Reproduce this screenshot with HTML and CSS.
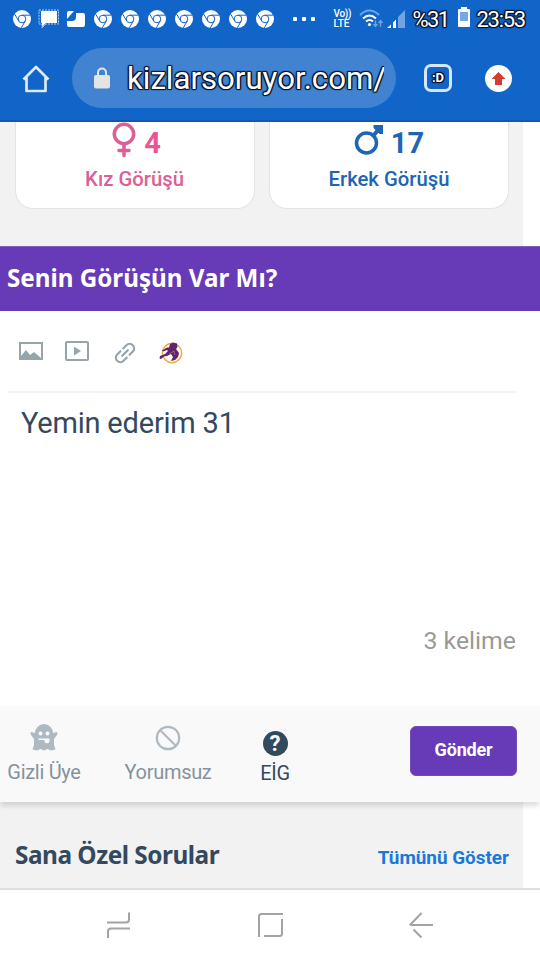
FILE: index.html
```html
<!DOCTYPE html>
<html lang="tr">
<head>
<meta charset="utf-8">
<title>kizlarsoruyor.com</title>
<link rel="stylesheet" href="styles.css">
</head>
<body>
<svg class="defs" width="0" height="0" aria-hidden="true">
  <symbol id="chrome" viewBox="0 0 18 18">
    <circle cx="9" cy="9" r="9" fill="#fff"/>
    <g fill="none" stroke="#1464c8" stroke-width="1"><circle cx="9" cy="9" r="3.8"/><path d="M9 5.2H17M5.7 11 1.7 4.1M12.2 11 8.3 17.9"/></g>
  </symbol>
</svg>
<div class="screen">
  <header class="browser">
    <div class="status">
      <div class="notifications">
        <svg><use href="#chrome"/></svg>
        <svg class="message" viewBox="0 0 22 20"><path d="M3 2h16v12H8l-4 4v-4H3z" fill="#fff"/><path d="M1 1h19.5v14H8l-4 4v-4H1z" fill="none" stroke="#b4d0f3" stroke-width="1" stroke-dasharray="2 1"/></svg>
        <svg class="flip" viewBox="0 0 20 18"><path d="M1 9 8 1H3Q1 1 1 3zM10 3h7q2 0 2 2v10q0 2-2 2H3q-2 0-2-2v-4h5q4 0 4-4z" fill="#fff"/></svg>
        <svg><use href="#chrome"/></svg>
        <svg><use href="#chrome"/></svg>
        <svg><use href="#chrome"/></svg>
        <svg><use href="#chrome"/></svg>
        <svg><use href="#chrome"/></svg>
        <svg><use href="#chrome"/></svg>
        <svg><use href="#chrome"/></svg>
      </div>
      <div class="dots"><i></i><i></i><i></i></div>
      <div class="volte"><span>Vo))</span><span>LTE</span></div>
      <svg class="wifi" viewBox="0 0 25 19"><g fill="none" stroke="#71a4e1" stroke-width="2"><path d="M1 6Q10.500-3 20 6"/></g><g fill="none" stroke="#fff" stroke-width="2"><path d="M4 9.500Q10.500 3.500 17 9.500M7 12.500Q10.500 9.500 14 12.500"/></g><circle cx="10.500" cy="15.500" r="1.600" fill="#fff"/><path d="M16.500 11.500v5M14.500 15l2 2.500 2-2.500M21.500 18v-6M19.500 14l2-2.500 2 2.500" stroke="#71a4e1" stroke-width="1.300" fill="none"/></svg>
      <svg class="signal" viewBox="0 0 18 18"><path d="M11 7 18 0v18h-7z" fill="#71a4e1"/><path d="M6 12.500 9 9.500V18H6zM0 18l4-3.500V18z" fill="#fff"/></svg>
      <span class="percent outlined">%31</span>
      <svg class="battery" viewBox="0 0 12 20"><path d="M3 0h6v2h2q1 0 1 1v16q0 1-1 1H1q-1 0-1-1V3q0-1 1-1h2z" fill="#fff"/><path d="M2 5h8v9H2z" fill="#78a8e4"/></svg>
      <span class="clock outlined">23:53</span>
    </div>
    <div class="toolbar">
      <svg class="home" viewBox="0 0 28 28"><path d="M1.500 14.500 14 2l12.500 12.500M4.500 12v14h19V12" fill="none" stroke="#dcebfd" stroke-width="2.700" stroke-linejoin="round"/></svg>
      <div class="address">
        <svg class="lock" viewBox="0 0 16 22"><path d="M4 9V5.500a4 4 0 0 1 8 0V9" fill="none" stroke="#e4e6e9" stroke-width="2"/><rect y="8" width="16" height="13.500" rx="2" fill="#e4e4e6"/></svg>
        <span class="url outlined">kizlarsoruyor.com/</span>
      </div>
      <div class="tabs outlined">:D</div>
      <svg class="update" viewBox="0 0 27 27"><circle cx="13.500" cy="13.500" r="13.500" fill="#fff"/><path d="m13.500 7 7 7h-3.500v6h-7v-6H6.500z" fill="#d23c31"/></svg>
    </div>
  </header>

  <section class="opinions">
    <div class="card girls">
      <div class="count"><svg class="venus" viewBox="0 0 24 36"><g fill="none" stroke="currentColor" stroke-width="3.500"><circle cx="12" cy="12" r="9.700"/><path d="M12 22v11.500M7 28.500h10" stroke-linecap="round"/></g></svg><b>4</b></div>
      <p>Kız Görüşü</p>
    </div>
    <div class="card boys">
      <div class="count"><svg class="mars" viewBox="0 0 30 32"><circle cx="12.500" cy="19" r="10" fill="none" stroke="currentColor" stroke-width="3.500"/><path d="m19 12 6-7" stroke="currentColor" stroke-width="4"/><path d="M19.500 1H29v9h-3.500L19.500 4z" fill="currentColor"/></svg><b>17</b></div>
      <p>Erkek Görüşü</p>
    </div>
  </section>

  <h2 class="prompt"><span>Senin Görüşün Var Mı?</span></h2>

  <section class="editor">
    <div class="tools">
      <svg class="image" viewBox="0 0 24 18"><path fill="#96a4ac" fill-rule="evenodd" d="M0 0h24v18H0zM2 2v12l5-6 4 5 4-3 7 6V2z"/></svg>
      <svg class="video" viewBox="0 0 24 20"><rect x="1" y="1" width="22" height="18" rx="1" fill="none" stroke="#96a4ac" stroke-width="2"/><path d="m9 5.500 7 4.500-7 4.500z" fill="#96a4ac"/></svg>
      <svg class="link" viewBox="0 0 24 24"><g fill="none" stroke="#96a4ac" stroke-width="2.200" stroke-linecap="round" transform="rotate(-45 12 12)"><path d="M10 7.500H5.500a4.500 4.500 0 0 0 0 9H10M14 7.500h4.500a4.500 4.500 0 0 1 0 9H14M8 12h8"/></g></svg>
      <svg class="hero" viewBox="0 0 24 22"><circle cx="13" cy="11" r="9.700" fill="#fffbed" stroke="#edaa43" stroke-width="1.400"/><path d="m11 2 3-1.500 4 1 .5 3.500-1.500 2 3 4-1 4-3 3-4 1 2-4-2-3-4 2-3 .5-3 2.500-1.500-.5.5-2.500 5-2 3-3-1-1-4 1.500-1-1 5-3h2z" fill="#632368"/><path d="m10 12 5-3 1 4" fill="none" stroke="#a57cab" stroke-width=".7"/></svg>
    </div>
    <div class="text">Yemin ederim 31</div>
    <div class="words">3 kelime</div>
  </section>

  <section class="actions">
    <div class="option hidden-user">
      <svg viewBox="0 0 28 28"><path fill="#aebac2" d="M5 10a9 9 0 0 1 18 0l4-1q1 1 0 3l-3 4v6l1.500 4.500-4.500 1-3.500-1.500-3.500 1.500-3.500-1.500-3.500 1.500-4.500-1L4 22v-6l-3-4Q0 9 1 9z"/><g fill="#f9fafb"><circle cx="10.500" cy="10.500" r="1.900"/><circle cx="17.500" cy="10.500" r="1.900"/><path d="M8.500 15.500h11v2.200a2.500 2.500 0 0 1-5 0v-.7h-6z"/></g></svg>
      <span>Gizli Üye</span>
    </div>
    <div class="option no-comment">
      <svg viewBox="0 0 26 26"><g fill="none" stroke="#aebac2" stroke-width="2.200"><circle cx="13" cy="13" r="11.200"/><path d="m5 5 16 16"/></g></svg>
      <span>Yorumsuz</span>
    </div>
    <div class="option help">
      <div class="question">?</div>
      <span>EİG</span>
    </div>
    <button class="send">Gönder</button>
  </section>

  <section class="related"><div>
    <h3>Sana Özel Sorular</h3>
    <a>Tümünü Göster</a>
  </div></section>

  <nav>
    <svg viewBox="0 0 28 28"><path d="M2 11.500h19q3 0 3-3V1.500M3 27V20.500q0-3 3-3h19"/></svg>
    <svg viewBox="0 0 28 28"><path d="M3 26V5.500Q3 3 5.500 3H27M8 25h15.500q2.500 0 2.500-2.500V8"/></svg>
    <svg viewBox="0 0 28 28"><path d="M14.500 2 3.500 13.500q1 .5 2 .5H26M6.500 18.500l8 8"/></svg>
  </nav>
</div>
</body>
</html>
```
FILE: styles.css
```css
* { box-sizing: border-box; }
body { margin: 0; background: #fff; font-family: Roboto, sans-serif; }
h2, h3, p { margin: 0; }
svg { display: block; flex: none; }
.defs { position: absolute; }
.screen { width: 540px; height: 960px; display: flex; flex-direction: column; overflow: hidden; }

.outlined { color: #fff; text-shadow: -1px -1px 1px #08142a, 1px -1px 1px #08142a, -1px 1px 1px #08142a, 1px 1px 1px #08142a, 0 -1px 0 #08142a, 0 1px 0 #08142a, -1px 0 0 #08142a, 1px 0 0 #08142a; }

.browser { height: 122px; background: #1164c8; border-bottom: 2px solid #1558a7; }
.status { height: 37px; display: flex; align-items: center; padding-left: 8.500px; }
.notifications { display: grid; grid-template-columns: repeat(10, 27px); justify-items: center; align-items: center; }
.notifications svg { width: 18px; height: 18px; }
.notifications .message { width: 22px; height: 20px; }
.notifications .flip { width: 20px; }
.dots { display: flex; gap: 5px; margin-left: 14px; width: 24px; }
.dots i { width: 4px; height: 4px; background: #fff; border-radius: 1px; flex: none; }
.volte { display: flex; flex-direction: column; margin-left: 17px; width: 19px; color: #fff; font-size: 10px; font-weight: 500; line-height: 10px; white-space: nowrap; }
.volte span:first-child { letter-spacing: -.3px; }
.wifi { width: 25px; height: 19px; margin-left: 6px; }
.signal { width: 18px; height: 18px; margin-left: 3px; }
.percent { margin-left: 8px; width: 35px; font-size: 22px; letter-spacing: -1.600px; line-height: 39px; padding-top: 2px; }
.battery { width: 12px; height: 20px; margin: 0 7px 4px 10px; }
.clock { font-size: 22px; letter-spacing: -1.300px; line-height: 39px; padding-top: 2px; }

.toolbar { height: 83px; display: flex; align-items: center; padding-left: 22px; }
.home { width: 28px; height: 28px; }
.address { width: 324px; height: 60px; margin: -2px 0 0 22px; padding: 0 12px 0 22px; border-radius: 30px; background: #4283d1; display: flex; align-items: center; }
.lock { width: 16px; height: 22px; }
.url { flex: 1; margin-left: 15px; padding-left: 2px; overflow: hidden; font-size: 31.200px; line-height: 60px; white-space: nowrap; padding-top: 3px; }
.tabs { width: 28px; height: 28px; margin: -1px 0 0 28px; border: 3px solid #d7e7fb; border-radius: 7px; font-size: 13px; font-weight: 700; line-height: 22px; text-align: center; }
.update { width: 27px; height: 27px; margin-left: 33px; }

.opinions { width: 523px; height: 124px; padding: 0 14px 0 14.500px; background: #f2f2f2; display: grid; grid-template-columns: 240px 240px; gap: 14.500px; }
.card { height: 87px; background: #fff; border: 1.500px solid #e4e4e4; border-top: 0; border-radius: 0 0 18px 18px; text-align: center; }
.count { height: 42px; display: flex; justify-content: center; align-items: flex-start; gap: 7px; }
.girls .count { padding-left: 4px; gap: 8px; }
.count b { font-size: 29px; line-height: 42px; font-weight: 700; }
.card p { font-size: 20.300px; line-height: 30px; font-weight: 500; }
.girls { color: #dc6097; }
.girls b { color: #ed5493; }
.boys { color: #2065b5; }
.venus { width: 24px; height: 36px; }
.mars { width: 30px; height: 32px; margin-top: 2px; }

.prompt { height: 65px; border-top: 1px solid #7e60bb; background: #673ab7; color: #fff; padding-left: 7px; font: 700 24.200px/61px "Noto Sans", sans-serif; white-space: nowrap; }

.editor { height: 395px; padding: 0 8px; display: flex; flex-direction: column; }
.tools { height: 82px; width: 509px; border-bottom: 2px solid #f2f3f4; display: flex; align-items: flex-start; padding-left: 11px; }
.image { width: 24px; height: 18px; margin-top: 31px; }
.video { width: 24px; height: 20px; margin: 30px 0 0 22px; }
.link { width: 24px; height: 24px; margin: 30px 0 0 24px; }
.hero { width: 24px; height: 22px; margin: 31px 0 0 22px; }
.text { padding-left: 13px; margin-top: 10px; flex: 1; font-size: 29px; letter-spacing: -.2px; line-height: 40px; color: #34495e; }
.words { height: 90px; width: 508px; text-align: right; color: #999; font-size: 24.800px; line-height: 50px; }

.actions { height: 96px; background: #f9f9fa; display: flex; padding-left: 7px; box-shadow: 0 5px 5px -1px #0002; position: relative; }
.option { display: flex; flex-direction: column; align-items: center; color: #85929c; font-size: 20px; letter-spacing: -.3px; line-height: 26px; white-space: nowrap; }
.option svg { width: 28px; height: 28px; margin-top: 17px; margin-bottom: 8px; }
.hidden-user { width: 74px; }
.no-comment { width: 88px; margin-left: 43px; }
.option.no-comment svg { width: 26px; height: 26px; margin-top: 19px; margin-bottom: 8px; }
.help { width: 30px; margin-left: 48px; color: #34495e; }
.question { width: 25px; height: 25px; margin: 25px 0 4px; border-radius: 50%; background: #314a5c; color: #fff; font-size: 22px; letter-spacing: 0; line-height: 26px; font-weight: 700; text-align: center; }
.send { width: 107px; height: 50px; margin: 20px 0 0 120px; border: 1px solid #714cb9; border-radius: 6px; background: #673ab7; color: #fff; padding: 0 0 4px; font: 700 18px Roboto, sans-serif; letter-spacing: -.2px; }

.related { height: 86px; }
.related div { width: 523px; height: 86px; padding: 0 14px 0 15px; background: #f2f2f2; display: flex; justify-content: space-between; }
.related h3 { color: #34495e; font: 700 24.400px/105px "Noto Sans", sans-serif; letter-spacing: -.5px; white-space: nowrap; }
.related a { color: #1978d8; font-size: 18.900px; font-weight: 700; line-height: 112px; white-space: nowrap; }

nav { height: 72px; border-top: 2px solid #dfdfdf; background: #fff; display: flex; gap: 123px; padding: 21px 0 0 105px; }
nav svg { width: 28px; height: 28px; fill: none; stroke: #a3a3a3; stroke-width: 2; }
```
